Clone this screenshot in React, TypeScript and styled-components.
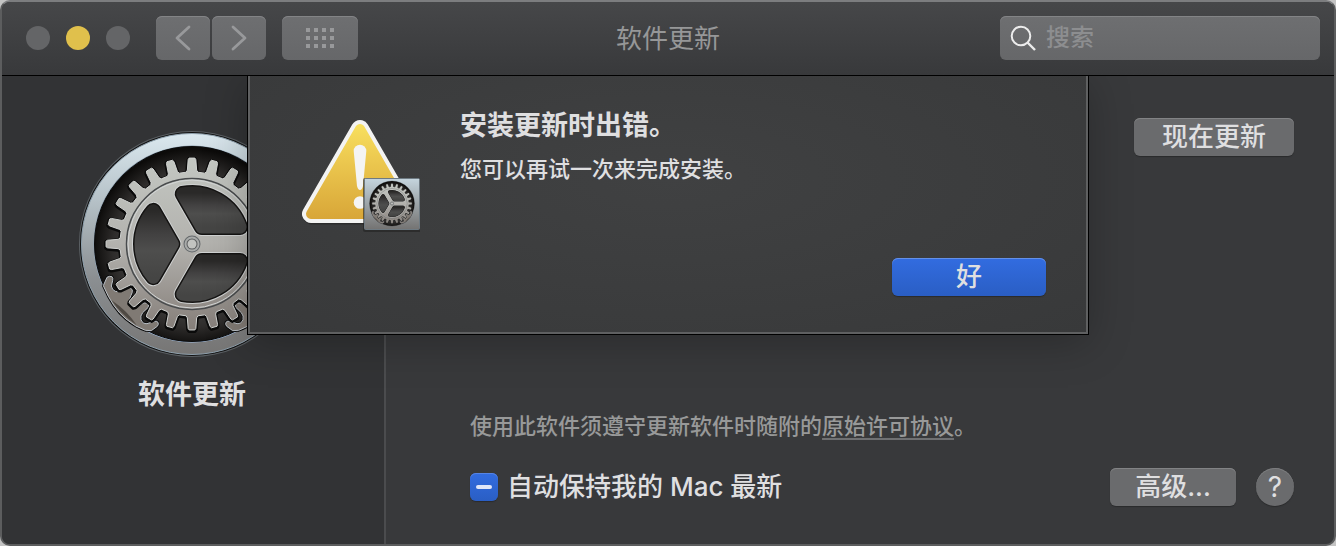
import React, { useEffect, useRef } from "react";
import styled, { createGlobalStyle, css } from "styled-components";

const GlobalStyle = createGlobalStyle`
  * { box-sizing: border-box; }
  body {
    margin: 0;
    background: #c4c4c4;
    font-family: Inter, "Noto Sans CJK SC", sans-serif;
    color: #dfdfe0;
  }
  button, input { font: inherit; color: inherit; margin: 0; }
`;

const Window = styled.div`
  display: flex;
  flex-direction: column;
  min-height: 100vh;
  border: 2px solid #5c5d5e;
  border-top-color: #7c7d7f;
  border-radius: 10px;
  background: #38393b;
  overflow: hidden;
`;

const Toolbar = styled.header`
  display: grid;
  grid-template-columns: 1fr auto 1fr;
  align-items: center;
  padding: 14px 14px 15px;
  background: linear-gradient(#464749, #38393b);
  border-bottom: 1px solid #000;
`;

const ToolbarLeft = styled.div`
  display: flex;
  align-items: center;
  padding-left: 10px;
`;

const Lights = styled.div`
  display: flex;
  gap: 16px;
  margin-right: 26px;
`;

const Light = styled.button<{ $active?: boolean }>`
  width: 24px;
  height: 24px;
  padding: 0;
  border: 0;
  border-radius: 50%;
  background: ${(p) => (p.$active ? "#e0c04c" : "#646567")};
`;

const raised = css`
  border: 0;
  border-radius: 6px;
  background: linear-gradient(#6e6f71, #666769);
  box-shadow: inset 0 1px #838486;
`;

const ToolButton = styled.button<{ $wide?: boolean }>`
  ${raised}
  display: grid;
  place-items: center;
  width: ${(p) => (p.$wide ? 76 : 54)}px;
  height: 44px;
  padding: 0;
  color: #98999b;
`;

const NavGroup = styled.div`
  display: flex;
  gap: 2px;
  margin-right: 16px;
`;

const Title = styled.h1`
  margin: 0;
  padding-top: 2px;
  font-size: 26px;
  line-height: 40px;
  font-weight: 400;
  color: #969798;
`;

const Search = styled.label`
  ${raised}
  display: flex;
  align-items: center;
  justify-self: end;
  gap: 10px;
  width: 320px;
  height: 44px;
  padding: 0 10px;
`;

const SearchInput = styled.input`
  flex: 1;
  min-width: 0;
  padding: 0;
  border: 0;
  outline: 0;
  background: none;
  font-size: 24px;
  line-height: 36px;
  font-weight: 500;
  &::placeholder { color: #8d8e90; opacity: 1; }
`;

const Body = styled.div`
  position: relative;
  display: flex;
  flex: 1;
  overflow: hidden;
`;

const Sidebar = styled.aside`
  display: flex;
  flex-direction: column;
  align-items: center;
  width: 384px;
  padding: 52px 2px 32px 0;
  border-right: 2px solid #4b4c4e;
  background: #323335;
`;

const PaneName = styled.h2`
  margin: 15px 0 0;
  font-size: 27px;
  line-height: 40px;
  font-weight: 700;
`;

const Main = styled.main`
  display: flex;
  flex: 1;
  flex-direction: column;
  padding: 42px 40px 38px 84px;
`;

const PushButton = styled.button<{ $width: number; $primary?: boolean }>`
  align-self: flex-end;
  width: ${(p) => p.$width}px;
  height: 38px;
  padding: 0;
  border: 0;
  border-radius: 6px;
  background: ${(p) => (p.$primary ? "linear-gradient(#326ce0, #2a5ec4)" : "#6a6b6d")};
  box-shadow: inset 0 1px ${(p) => (p.$primary ? "#6490e8" : "#828385")}, 0 1px 1px #2a2b2c;
  font-size: 26px;
  line-height: 38px;
  font-weight: 500;
`;

const License = styled.p`
  margin: auto 0 26px;
  font-size: 22px;
  line-height: 32px;
  font-weight: 500;
  color: #989999;
`;

const LicenseLink = styled.a`
  color: inherit;
  text-decoration: underline #6f7072 2px;
  text-underline-offset: 4px;
`;

const Options = styled.div`
  display: flex;
  align-items: center;
  gap: 20px;
`;

const CheckLabel = styled.label`
  display: flex;
  align-items: center;
  gap: 9px;
  margin-right: auto;
  font-size: 26px;
  line-height: 38px;
  font-weight: 500;
`;

const Checkbox = styled.input`
  appearance: none;
  display: grid;
  place-items: center;
  width: 28px;
  height: 28px;
  border-radius: 6px;
  background: linear-gradient(#326ce0, #2a5ec4);
  box-shadow: inset 0 1px #5684e4, 0 1px 1px #2a2b2c;
  &:indeterminate::before {
    content: "";
    width: 16px;
    height: 4px;
    border-radius: 2px;
    background: #dfe6f8;
  }
`;

const HelpButton = styled.button`
  width: 38px;
  height: 38px;
  padding: 0;
  border: 0;
  border-radius: 50%;
  background: #6a6b6d;
  box-shadow: inset 0 1px #7c7d7f, 0 1px 1px #2a2b2c;
  font-size: 28px;
  line-height: 38px;
`;

const Sheet = styled.section`
  position: absolute;
  top: 0;
  left: 50%;
  transform: translateX(-50%);
  display: flex;
  gap: 40px;
  width: 840px;
  max-width: 100%;
  padding: 30px 40px 36px 50px;
  border: 2px solid #5f6061;
  border-top: 0;
  background: radial-gradient(ellipse at 50% 40%, #404142, #38393a);
  box-shadow: 0 0 0 1px #000, 0 8px 40px rgba(0, 0, 0, 0.25);
`;

const AlertIcon = styled.svg`
  flex: none;
  margin-top: 10px;
`;

const AlertContent = styled.div`
  display: flex;
  flex: 1;
  flex-direction: column;
`;

const AlertTitle = styled.h2`
  margin: 0;
  font-size: 27px;
  line-height: 40px;
  font-weight: 700;
`;

const AlertText = styled.p`
  margin: 8px 0 74px;
  font-size: 22px;
  line-height: 30px;
  font-weight: 500;
`;

const polar = (r: number, deg: number) => {
  const a = (deg * Math.PI) / 180;
  return `${(r * Math.cos(a)).toFixed(2)} ${(r * Math.sin(a)).toFixed(2)}`;
};

const TEETH = 24;
const gearOutline =
  "M" +
  Array.from({ length: TEETH }, (_, i) => {
    const c = (i * 360) / TEETH;
    return [
      polar(72, c - 4.8),
      polar(74, c - 3.6),
      polar(84.5, c - 2.6),
      polar(86, c - 1.9),
      polar(86, c + 1.9),
      polar(84.5, c + 2.6),
      polar(74, c + 3.6),
      polar(72, c + 4.8),
    ].join("L");
  }).join("L") +
  "Z";

// Openings between the spokes, inset so that a round 16-unit stroke restores their size.
const openings = [0, 120, 240].map((turn) => {
  const half = 17;
  const outer = 51;
  const spread = (Math.asin(half / outer) * 180) / Math.PI;
  const inner = half / Math.sin(Math.PI / 3);
  return `M${polar(inner, turn + 60)}L${polar(outer, turn + spread)}A${outer} ${outer} 0 0 1 ${polar(outer, turn + 120 - spread)}Z`;
});

const pinion =
  "M22 65L33 40Q40 35 48 38Q52 42 50 50L46 66Q48 78 58 82Q68 86 74 78Q80 68 92 68Q105 70 109 78Q110 86 105 94Q98 106 104 116Q112 128 124 128Q130 127 136 121Q144 114 152 117Q160 121 157 130L140 146Q132 156 135 167Q140 180 153 179L172 173Q182 169 186 175Q189 181 184 187L166 200L148 199Q120 190 90 165Q50 132 22 65Z";

function GearWheel({ id, ring }: { id: string; ring?: boolean }) {
  const ref = (n: string) => `url(#${id}-${n})`;
  return (
    <>
      <defs>
        <linearGradient id={`${id}-rim`} gradientUnits="userSpaceOnUse" x1="0" y1="-112" x2="0" y2="112">
          <stop offset="0" stopColor="#dbe9f0" />
          <stop offset="0.3" stopColor="#b6c2c8" />
          <stop offset="0.65" stopColor="#8b8f92" />
          <stop offset="1" stopColor="#767574" />
        </linearGradient>
        <linearGradient id={`${id}-metal`} gradientUnits="userSpaceOnUse" x1="0" y1="-86" x2="0" y2="86">
          <stop offset="0" stopColor="#c3c7c2" />
          <stop offset="0.5" stopColor="#b3b2ae" />
          <stop offset="1" stopColor="#857e79" />
        </linearGradient>
        <linearGradient id={`${id}-edge`} gradientUnits="userSpaceOnUse" x1="0" y1="-100" x2="0" y2="100">
          <stop offset="0" stopColor="#8295a5" />
          <stop offset="0.5" stopColor="#8ea0b0" />
          <stop offset="1" stopColor="#a3c2ea" />
        </linearGradient>
        <radialGradient id={`${id}-well`} gradientUnits="userSpaceOnUse" cx="0" cy="4" r="99">
          <stop offset="0" stopColor="#4e4e4d" />
          <stop offset="0.55" stopColor="#444443" />
          <stop offset="0.8" stopColor="#2e2c2b" />
          <stop offset="1" stopColor="#0c0b0a" />
        </radialGradient>
        <linearGradient id={`${id}-shade`} x1="0" y1="0" x2="0" y2="1">
          <stop offset="0" stopColor="#2a2928" />
          <stop offset="0.35" stopColor="#424141" />
          <stop offset="0.6" stopColor="#4e4e4d" />
          <stop offset="1" stopColor="#454544" />
        </linearGradient>
      </defs>
      {ring && (
        <>
          <circle r="113" fill="#5b6064" />
          <circle r="112" fill="#111" />
          <circle r="110.500" fill={ref("rim")} stroke="#8fa1ae" strokeWidth="1" />
          <circle r="98.500" fill={ref("edge")} />
        </>
      )}
      <circle r="97.500" fill={ref("well")} stroke="#0b0b0b" strokeWidth="1" />
      {[1, -1].map((side) => (
        <g key={side} transform={`scale(${side} 1) translate(-96 20) scale(.3333)`}>
          <path d={pinion} fill="#0a0a0a" stroke="#0a0a0a" strokeWidth="8" />
          <path d={pinion} fill="#807a74" stroke="#bcc2c8" strokeWidth="3" />
          <path d="M46 108Q74 150 122 184Q96 142 46 108Z" fill="#4f4a44" />
        </g>
      ))}
      <path d={gearOutline} fill="#0a0a0a" stroke="#0a0a0a" strokeWidth="4" strokeLinejoin="round" transform="translate(0 1)" />
      <path d={gearOutline} fill={ref("metal")} stroke="#d0d2d0" strokeWidth="1" strokeLinejoin="round" />
      <circle r="65.500" fill="none" stroke="#484b4d" strokeWidth="1.500" />
      <circle r="64" fill="none" stroke="#d3d6d6" strokeWidth="1" />
      {openings.map((d) => (
        <g key={d} strokeLinejoin="round">
          <path d={d} fill="#d0d2d2" stroke="#d0d2d2" strokeWidth="18" />
          <path d={d} fill="#151413" stroke="#151413" strokeWidth="16" />
          <path d={d} fill={ref("shade")} stroke={ref("shade")} strokeWidth="13" />
        </g>
      ))}
      <circle r="8.500" fill="#64686b" />
      <circle r="7.500" fill="#a9abaa" />
      <circle r="5.500" fill="#5a5c5d" />
      <circle r="4.500" fill="#c2c3c0" />
    </>
  );
}

function WarningIcon() {
  return (
    <AlertIcon width="120" height="118" viewBox="0 0 120 118" aria-hidden="true">
      <defs>
        <linearGradient id="warn" gradientUnits="userSpaceOnUse" x1="0" y1="6" x2="0" y2="103">
          <stop offset="0" stopColor="#f8e15f" />
          <stop offset="0.4" stopColor="#ecc84f" />
          <stop offset="1" stopColor="#d8a638" />
        </linearGradient>
        <linearGradient id="plate" x1="0" y1="0" x2="0" y2="1">
          <stop offset="0" stopColor="#c5d5de" />
          <stop offset="0.5" stopColor="#9ca4a8" />
          <stop offset="1" stopColor="#747372" />
        </linearGradient>
      </defs>
      <path d="M60 14L12 99H108Z" fill="#2c2c2c" stroke="#2c2c2c" strokeWidth="19" strokeLinejoin="round" />
      <path d="M60 13L11 98H109Z" fill="#f3f3f2" stroke="#f3f3f2" strokeWidth="18" strokeLinejoin="round" />
      <path d="M60 13L11 98H109Z" fill="url(#warn)" stroke="url(#warn)" strokeWidth="10" strokeLinejoin="round" />
      <path d="M53.700 35A6.300 6.300 0 0 1 66.300 35L63 70Q62 74 60 74Q58 74 57 70Z" fill="#f4f4f3" />
      <circle cx="60" cy="86.500" r="6.300" fill="#f4f4f3" />
      <rect x="63" y="62" width="58" height="54" rx="2" fill="#222" opacity="0.6" />
      <rect x="64.500" y="62.500" width="55" height="51" rx="1" fill="url(#plate)" stroke="#6e7a82" />
      <g transform="translate(92 87.500) scale(.23)">
        <GearWheel id="badge" />
      </g>
    </AlertIcon>
  );
}

const gridDots = [0, 8, 16].flatMap((y) => [0, 8, 16, 24].map((x) => ({ x, y })));

export default function App() {
  const keepUpdated = useRef<HTMLInputElement>(null);
  useEffect(() => {
    if (keepUpdated.current) keepUpdated.current.indeterminate = true;
  }, []);

  return (
    <>
      <GlobalStyle />
      <Window>
        <Toolbar>
          <ToolbarLeft>
            <Lights>
              <Light aria-label="关闭" />
              <Light aria-label="最小化" $active />
              <Light aria-label="缩放" />
            </Lights>
            <NavGroup>
              <ToolButton aria-label="后退">
                <svg width="16" height="26" viewBox="0 0 16 26" fill="none" stroke="currentColor" strokeWidth="2.800" strokeLinecap="round" strokeLinejoin="round">
                  <path d="M14 2L2 13L14 24" />
                </svg>
              </ToolButton>
              <ToolButton aria-label="前进">
                <svg width="16" height="26" viewBox="0 0 16 26" fill="none" stroke="currentColor" strokeWidth="2.800" strokeLinecap="round" strokeLinejoin="round">
                  <path d="M2 2L14 13L2 24" />
                </svg>
              </ToolButton>
            </NavGroup>
            <ToolButton aria-label="显示全部" $wide>
              <svg width="28" height="20" fill="currentColor">
                {gridDots.map((d) => (
                  <rect key={`${d.x}-${d.y}`} x={d.x} y={d.y} width="4" height="4" />
                ))}
              </svg>
            </ToolButton>
          </ToolbarLeft>
          <Title>软件更新</Title>
          <Search>
            <svg width="26" height="26" viewBox="0 0 26 26" fill="none" stroke="#ececec" strokeWidth="2" aria-hidden="true">
              <circle cx="11" cy="11" r="9.300" />
              <path d="M17.500 17.500L25 25" strokeWidth="2.400" />
            </svg>
            <SearchInput type="text" placeholder="搜索" aria-label="搜索" />
          </Search>
        </Toolbar>
        <Body>
          <Sidebar>
            <svg width="232" height="232" viewBox="-116 -116 232 232" aria-hidden="true">
              <GearWheel id="pane" ring />
            </svg>
            <PaneName>软件更新</PaneName>
          </Sidebar>
          <Main>
            <PushButton $width={160}>现在更新</PushButton>
            <License>
              使用此软件须遵守更新软件时随附的<LicenseLink href="#license">原始许可协议</LicenseLink>。
            </License>
            <Options>
              <CheckLabel>
                <Checkbox type="checkbox" ref={keepUpdated} />
                自动保持我的 Mac 最新
              </CheckLabel>
              <PushButton $width={126}>高级...</PushButton>
              <HelpButton aria-label="帮助">?</HelpButton>
            </Options>
          </Main>
          <Sheet role="alertdialog" aria-labelledby="alert-title">
            <WarningIcon />
            <AlertContent>
              <AlertTitle id="alert-title">安装更新时出错。</AlertTitle>
              <AlertText>您可以再试一次来完成安装。</AlertText>
              <PushButton $width={154} $primary>好</PushButton>
            </AlertContent>
          </Sheet>
        </Body>
      </Window>
    </>
  );
}
